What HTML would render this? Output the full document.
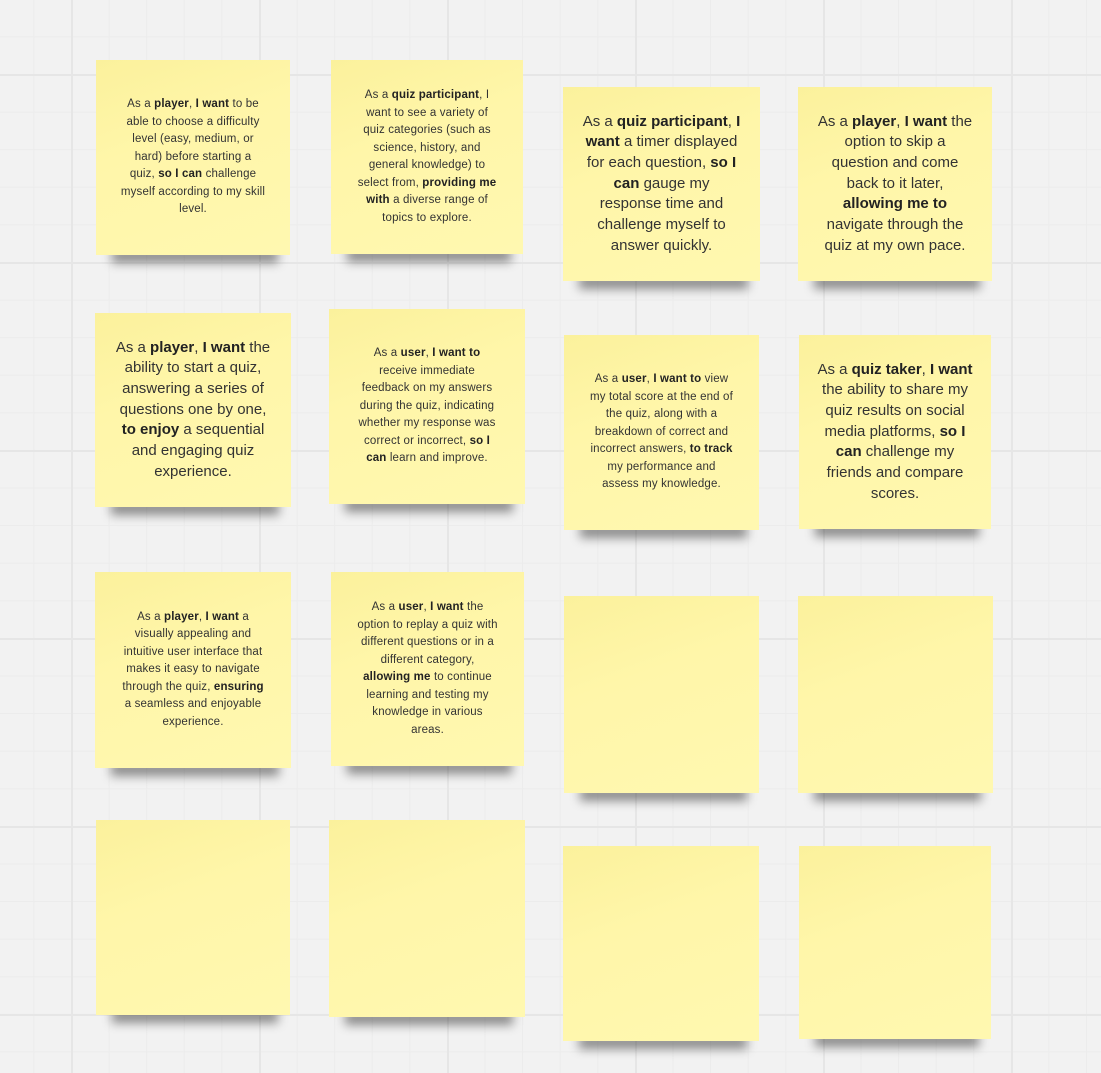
<!DOCTYPE html>
<html><head><meta charset="utf-8"><style>
html,body{margin:0;padding:0}
body{width:1101px;height:1073px;overflow:hidden;position:relative;background-color:#f2f2f2;
background-image:
linear-gradient(to right,#e6e6e6 2px,transparent 2px),
linear-gradient(to bottom,#e6e6e6 2px,transparent 2px),
linear-gradient(to right,#ececec 1px,transparent 1px),
linear-gradient(to bottom,#ececec 1px,transparent 1px);
background-size:188px 188px,188px 188px,37.6px 37.6px,37.6px 37.6px;
background-position:71px 0,0 74px,71px 0,0 74px;
font-family:"Liberation Sans",sans-serif;color:#333}
.n{position:absolute;display:flex;align-items:center;justify-content:center;text-align:center;box-sizing:border-box;padding:0 6px;
background:linear-gradient(160deg,#fbf19c 0%,#fff6a9 40%,#fff8b0 100%)}
.n>div{width:100%}
.n::after{content:"";position:absolute;left:16px;right:12px;bottom:-8px;height:14px;background:rgba(0,0,0,.42);filter:blur(5px);z-index:-1}
.s{font-size:11.5px;line-height:17.5px;letter-spacing:.15px}
.l{font-size:15px;line-height:20.7px}
b{font-weight:bold;color:#222}
</style></head><body>
<div class="n s" style="left:96px;top:60px;width:194px;height:195px"><div>As a <b>player</b>, <b>I want</b> to be<br>able to choose a difficulty<br>level (easy, medium, or<br>hard) before starting a<br>quiz, <b>so I can</b> challenge<br>myself according to my skill<br>level.</div></div>
<div class="n s" style="left:331px;top:60px;width:192px;height:194px"><div>As a <b>quiz participant</b>, I<br>want to see a variety of<br>quiz categories (such as<br>science, history, and<br>general knowledge) to<br>select from, <b>providing me</b><br><b>with</b> a diverse range of<br>topics to explore.</div></div>
<div class="n l" style="left:563px;top:87px;width:197px;height:194px"><div>As a <b>quiz participant</b>, <b>I</b><br><b>want</b> a timer displayed<br>for each question, <b>so I</b><br><b>can</b> gauge my<br>response time and<br>challenge myself to<br>answer quickly.</div></div>
<div class="n l" style="left:798px;top:87px;width:194px;height:194px"><div>As a <b>player</b>, <b>I want</b> the<br>option to skip a<br>question and come<br>back to it later,<br><b>allowing me to</b><br>navigate through the<br>quiz at my own pace.</div></div>

<div class="n l" style="left:95px;top:313px;width:196px;height:194px"><div>As a <b>player</b>, <b>I want</b> the<br>ability to start a quiz,<br>answering a series of<br>questions one by one,<br><b>to enjoy</b> a sequential<br>and engaging quiz<br>experience.</div></div>
<div class="n s" style="left:329px;top:309px;width:196px;height:195px"><div>As a <b>user</b>, <b>I want to</b><br>receive immediate<br>feedback on my answers<br>during the quiz, indicating<br>whether my response was<br>correct or incorrect, <b>so I</b><br><b>can</b> learn and improve.</div></div>
<div class="n s" style="left:564px;top:335px;width:195px;height:195px"><div>As a <b>user</b>, <b>I want to</b> view<br>my total score at the end of<br>the quiz, along with a<br>breakdown of correct and<br>incorrect answers, <b>to track</b><br>my performance and<br>assess my knowledge.</div></div>
<div class="n l" style="left:799px;top:335px;width:192px;height:194px"><div>As a <b>quiz taker</b>, <b>I want</b><br>the ability to share my<br>quiz results on social<br>media platforms, <b>so I</b><br><b>can</b> challenge my<br>friends and compare<br>scores.</div></div>

<div class="n s" style="left:95px;top:572px;width:196px;height:196px"><div>As a <b>player</b>, <b>I want</b> a<br>visually appealing and<br>intuitive user interface that<br>makes it easy to navigate<br>through the quiz, <b>ensuring</b><br>a seamless and enjoyable<br>experience.</div></div>
<div class="n s" style="left:331px;top:572px;width:193px;height:194px"><div>As a <b>user</b>, <b>I want</b> the<br>option to replay a quiz with<br>different questions or in a<br>different category,<br><b>allowing me</b> to continue<br>learning and testing my<br>knowledge in various<br>areas.</div></div>
<div class="n" style="left:564px;top:596px;width:195px;height:197px"></div>
<div class="n" style="left:798px;top:596px;width:195px;height:197px"></div>

<div class="n" style="left:96px;top:820px;width:194px;height:195px"></div>
<div class="n" style="left:329px;top:820px;width:196px;height:197px"></div>
<div class="n" style="left:563px;top:846px;width:196px;height:195px"></div>
<div class="n" style="left:799px;top:846px;width:192px;height:193px"></div>
</body></html>
